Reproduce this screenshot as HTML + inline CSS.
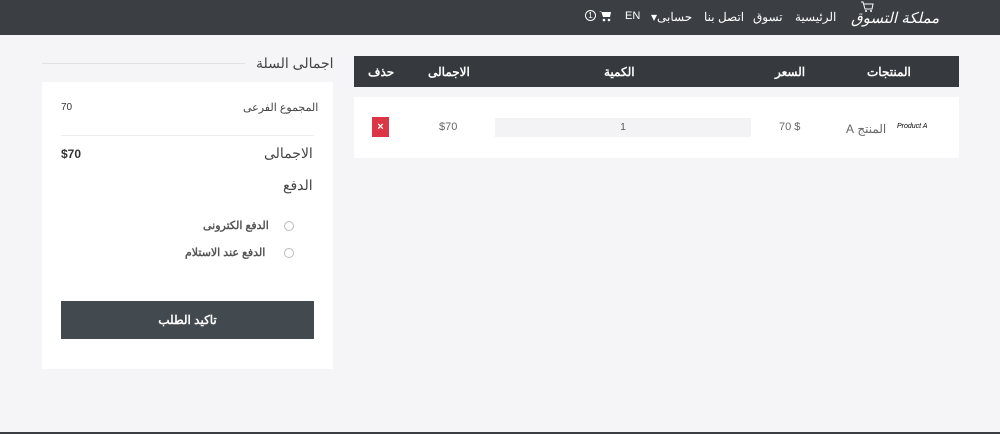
<!DOCTYPE html><html><head><meta charset="utf-8"><style>
*{margin:0;padding:0;box-sizing:border-box}
body{width:1000px;height:434px;background:#f5f4f7;position:relative;overflow:hidden;font-family:"Liberation Sans","Noto Sans CJK SC",sans-serif;color:#333}
.a{position:absolute;white-space:nowrap}
.hd{left:0;top:0;width:1000px;height:35px;background:#3b3e43}
.w{color:#fff;font-size:12px}
.th{color:#fff;font-size:12px;font-weight:bold}
</style></head><body>
<div class="a hd"></div>
<div class="a w" style="left:851px;top:9px;font-size:15px;font-style:italic">مملكة التسوق</div>
<svg class="a" style="left:860px;top:1px" width="14" height="12"><path d="M1 1h2l2 7h7l1-5H4" stroke="#fff" fill="none"/><circle cx="6" cy="10" r="1" fill="#fff"/><circle cx="11" cy="10" r="1" fill="#fff"/></svg>
<div class="a w" style="left:795px;top:10px">الرئيسية</div>
<div class="a w" style="left:753px;top:10px">تسوق</div>
<div class="a w" style="left:704px;top:10px">اتصل بنا</div>
<div class="a w" style="left:651px;top:10px">▾حسابى</div>
<div class="a w" style="left:625px;top:10px;font-size:11px">EN</div>
<svg class="a" style="left:599px;top:10px" width="13" height="12"><path d="M0 1h2l2 6h7l1-5H3z" fill="#fff"/><circle cx="5" cy="10" r="1.3" fill="#fff"/><circle cx="10" cy="10" r="1.3" fill="#fff"/></svg>
<div class="a" style="left:585px;top:10px;width:11px;height:11px;border:1px solid #fff;border-radius:50%;color:#fff;font-size:8px;text-align:center;line-height:9px">1</div>

<div class="a" style="left:354px;top:56px;width:605px;height:31px;background:#363a3f"></div>
<div class="a th" style="left:867px;top:65px">المنتجات</div>
<div class="a th" style="left:775px;top:65px">السعر</div>
<div class="a th" style="left:604px;top:65px">الكمية</div>
<div class="a th" style="left:428px;top:65px">الاجمالى</div>
<div class="a th" style="left:368px;top:65px">حذف</div>
<div class="a" style="left:354px;top:97px;width:605px;height:61px;background:#fff"></div>
<div class="a" style="left:897px;top:123px;font-size:7px;font-style:italic;color:#000">Product A</div>
<div class="a" dir="rtl" style="left:846px;top:122px;font-size:12px;color:#666">المنتج A</div>
<div class="a" style="left:779px;top:121px;font-size:11px;color:#666">70 $</div>
<div class="a" style="left:495px;top:118px;width:256px;height:19px;background:#f3f2f5;text-align:center;font-size:10px;line-height:19px;color:#555">1</div>
<div class="a" style="left:439px;top:121px;font-size:11px;color:#666">$70</div>
<div class="a" style="left:372px;top:117px;width:17px;height:20px;background:#dc3545;color:#fff;font-size:11px;font-weight:bold;text-align:center;line-height:20px">×</div>

<div class="a" style="left:42px;top:63px;width:203px;height:1px;background:#e2e2e2"></div>
<div class="a" style="left:256px;top:55px;font-size:14px;color:#444">اجمالى السلة</div>
<div class="a" style="left:42px;top:82px;width:291px;height:287px;background:#fff"></div>
<div class="a" style="left:243px;top:101px;font-size:11px;color:#444">المجموع الفرعى</div>
<div class="a" style="left:61px;top:102px;font-size:10px;color:#333">70</div>
<div class="a" style="left:61px;top:135px;width:253px;height:1px;background:#eee"></div>
<div class="a" style="left:264px;top:145px;font-size:14px;color:#444">الاجمالى</div>
<div class="a" style="left:61px;top:147px;font-size:12px;font-weight:bold;color:#333">$70</div>
<div class="a" style="left:283px;top:177px;font-size:14px;color:#444">الدفع</div>
<div class="a" style="left:284px;top:221px;width:10px;height:10px;border:1px solid #bbb;border-radius:50%"></div>
<div class="a" style="left:203px;top:219px;font-size:11px;font-weight:bold;color:#555">الدفع الكترونى</div>
<div class="a" style="left:284px;top:248px;width:10px;height:10px;border:1px solid #bbb;border-radius:50%"></div>
<div class="a" style="left:185px;top:246px;font-size:11px;font-weight:bold;color:#555">الدفع عند الاستلام</div>
<div class="a" style="left:61px;top:301px;width:253px;height:38px;background:#434a4f;color:#fff;font-size:12px;font-weight:bold;text-align:center;line-height:38px">تاكيد الطلب</div>
<div class="a" style="left:0;top:432px;width:1000px;height:2px;background:#3b3e43"></div>
</body></html>
